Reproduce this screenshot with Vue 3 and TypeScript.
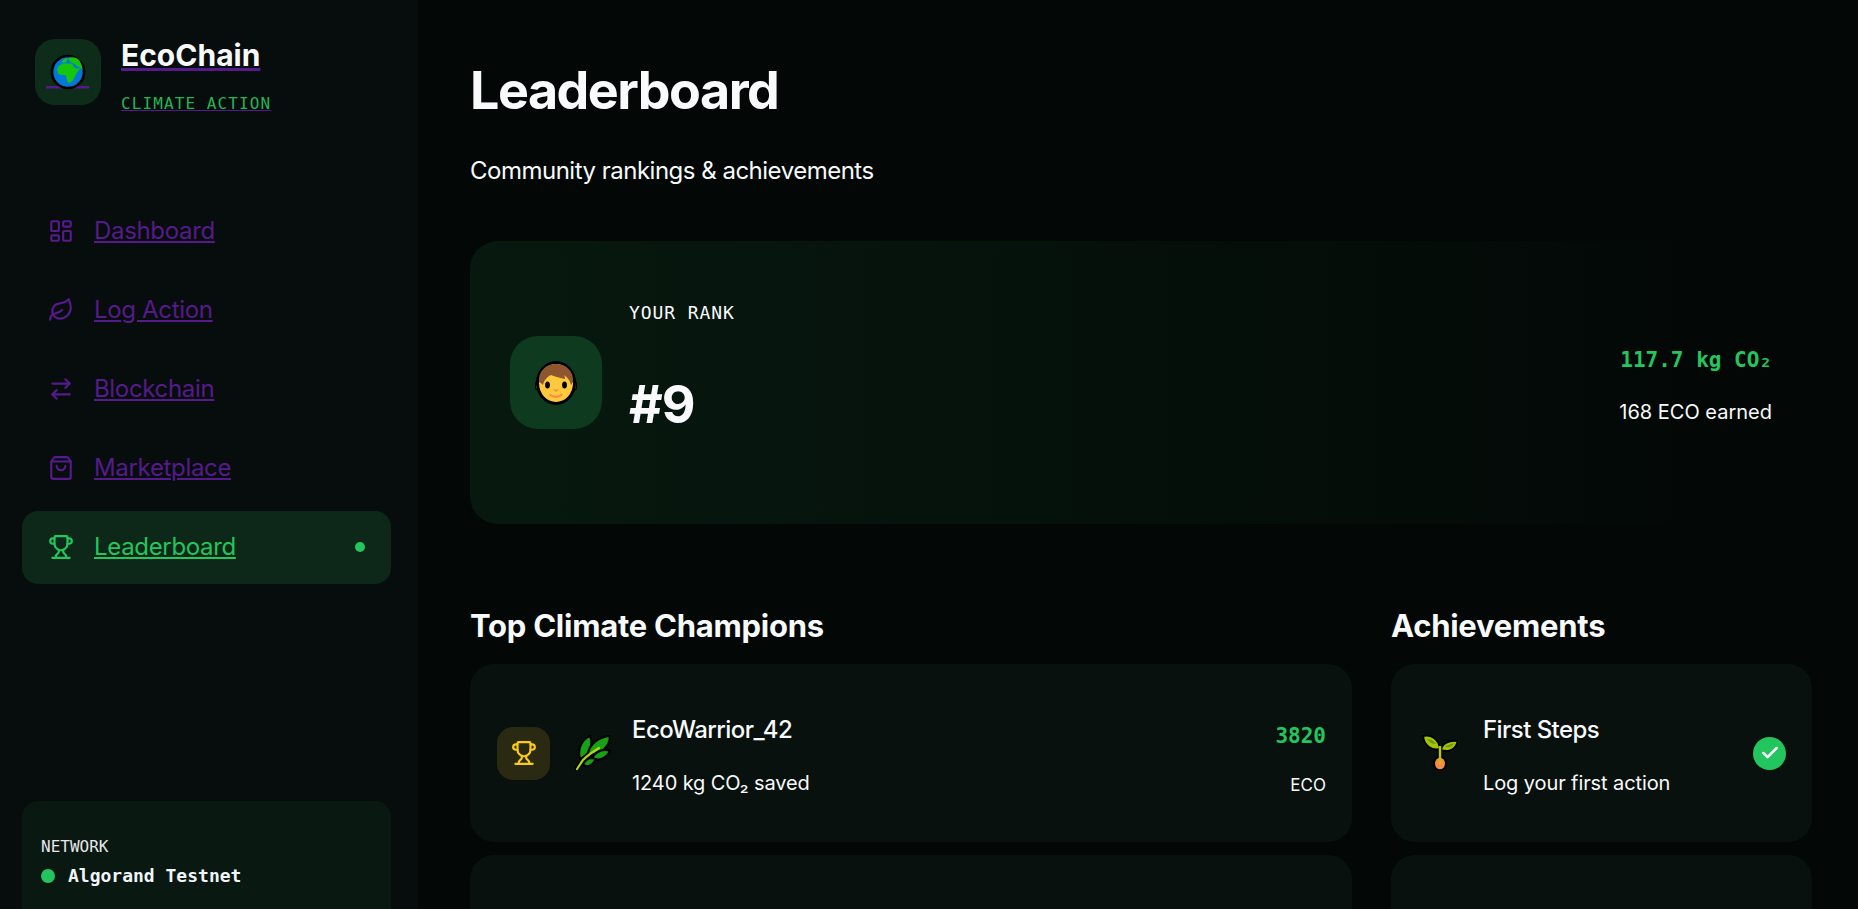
<template>
  <div class="app">
    <aside class="sidebar">
      <a href="#" class="brand">
        <span class="logo">
          <svg viewBox="0 0 66 66" width="66" height="66">
            <rect x="11" y="47" width="43" height="2.5" fill="#551a8b" />
            <circle cx="33" cy="33" r="16" fill="#0078d7" stroke="#000" stroke-width="2.6" />
            <path d="M22 30C23 27 26 25 29 24.500C31 24 35 25 37 24.500C38 26 39 29 41 29.500L45 29C44 32 41 34 40 37C39 40 37 43 34 44.500C32 43 31.500 39 31 36.500C28 36 24 36 23 34z" fill="#16c60c" />
            <path d="M33 19.500C37 17.500 41 18 44 21C46 24 47.500 27 47.500 31C46 29 44 28 42 27C40 25 38 24 36 23.500zM27 22l4-3 2 1-2 3-3 1z" fill="#16c60c" />
          </svg>
        </span>
        <span class="brand-text">
          <span class="brand-name">EcoChain</span>
          <span class="brand-tag">CLIMATE ACTION</span>
        </span>
      </a>

      <nav class="nav">
        <a
          v-for="item in navItems"
          :key="item.label"
          href="#"
          :class="['nav-item', { active: item.active }]"
        >
          <svg class="nav-icon" viewBox="0 0 24 24" fill="none" stroke="currentColor" stroke-width="2" stroke-linecap="round" stroke-linejoin="round">
            <path v-for="d in item.paths" :key="d" :d="d" />
          </svg>
          <span class="nav-label">{{ item.label }}</span>
          <span v-if="item.active" class="nav-dot"></span>
        </a>
      </nav>

      <div class="network">
        <div class="network-label">NETWORK</div>
        <div class="network-value"><span class="network-dot"></span>Algorand Testnet</div>
      </div>
    </aside>

    <main class="main">
      <h1 class="title">Leaderboard</h1>
      <p class="subtitle">Community rankings &amp; achievements</p>

      <section class="rank-card">
        <div class="rank-left">
          <div class="avatar">
            <svg viewBox="0 0 42 44" width="42" height="44">
              <rect x="0" y="19" width="42" height="11" rx="4" fill="#000" />
              <rect x="1.500" y="20" width="39" height="9" rx="3" fill="#ffc83d" />
              <ellipse cx="21" cy="22" rx="20" ry="22" fill="#000" />
              <ellipse cx="21" cy="22" rx="17" ry="19" fill="#ffc83d" />
              <path d="M4 21C3 10 11 3 21 3s18 7 17 18c-1 1-1 2-2 3-1-5-4-8-7-10 1 2 1 3 1 4-6-1-11-3-14-4-4 2-7 5-8 10-1-1-2-2-4-3z" fill="#8e562e" />
              <ellipse cx="12.500" cy="24" rx="2.400" ry="3.600" fill="#000" />
              <ellipse cx="29.500" cy="24" rx="2.400" ry="3.600" fill="#000" />
              <path d="M18 28.500h6l-3 2.400z" fill="#f7894a" />
              <path d="M15.500 34c3 2.400 8 2.400 11 0" fill="none" stroke="#f7894a" stroke-width="2.200" stroke-linecap="round" />
            </svg>
          </div>
          <div class="rank-info">
            <div class="rank-label">YOUR RANK</div>
            <div class="rank-value">#9</div>
          </div>
        </div>
        <div class="rank-right">
          <div class="rank-co2">117.7 kg CO₂</div>
          <div class="rank-eco">168 ECO earned</div>
        </div>
      </section>

      <div class="columns">
        <section class="col-left">
          <h2 class="section-title">Top Climate Champions</h2>
          <div class="card">
            <div class="medal">
              <svg viewBox="0 0 24 24" width="26" height="26" fill="none" stroke="currentColor" stroke-width="2" stroke-linecap="round" stroke-linejoin="round">
                <path v-for="d in trophyPaths" :key="d" :d="d" />
              </svg>
            </div>
            <svg class="emoji herb" viewBox="0 0 36 36" width="36" height="36">
              <path d="M2 34L8 25Q14 19 24 13" fill="none" stroke="#000" stroke-width="5" stroke-linecap="round" />
              <g fill="#16a116" stroke="#000" stroke-width="2.200" stroke-linejoin="round">
                <path d="M5 24C2 14 7 4 15 1C19 10 14 20 5 24z" />
                <path d="M13 19C14 9 24 2 35 1C35 11 26 21 13 19z" />
                <path d="M17 23C21 16 29 13 35 16C32 23 24 27 17 23z" />
                <path d="M8 30C10 24 15 22 21 24C18 30 13 33 8 30z" />
              </g>
              <path d="M2 34L8 25Q14 19 24 13" fill="none" stroke="#b5d60c" stroke-width="2.200" stroke-linecap="round" />
            </svg>
            <div class="card-body">
              <div class="card-title">EcoWarrior_42</div>
              <div class="card-sub">1240 kg CO₂ saved</div>
            </div>
            <div class="score">
              <div class="score-value">3820</div>
              <div class="score-unit">ECO</div>
            </div>
          </div>
          <div class="card"></div>
        </section>

        <section class="col-right">
          <h2 class="section-title">Achievements</h2>
          <div class="card ach">
            <svg class="emoji" viewBox="0 0 36 36" width="36" height="36">
              <path d="M18 12V26" stroke="#000" stroke-width="5" fill="none" />
              <ellipse cx="18" cy="28.500" rx="6" ry="6.800" fill="#f7894a" stroke="#000" stroke-width="2" />
              <g fill="#a4c400" stroke="#000" stroke-width="2" stroke-linejoin="round">
                <path d="M1 1C9 -1 17 4 18 14C10 16 2 11 1 1z" />
                <path d="M19 15C20 8 27 5 35.500 6C35 13 28 18 19 15z" />
              </g>
              <path d="M5 4C9 4 12 6 14 9C10 9 7 7 5 4zM23 12C25 10 28 9 32 8.500C30 12 26 13 23 12z" fill="#6f9a00" />
              <path d="M18 11V29" stroke="#b5c800" stroke-width="2.400" fill="none" />
            </svg>
            <div class="card-body">
              <div class="card-title">First Steps</div>
              <div class="card-sub">Log your first action</div>
            </div>
            <span class="check">
              <svg viewBox="0 0 24 24" width="20" height="20" fill="none" stroke="#fff" stroke-width="3" stroke-linecap="round" stroke-linejoin="round">
                <path d="M20 6 9 17l-5-5" />
              </svg>
            </span>
          </div>
          <div class="card"></div>
        </section>
      </div>
    </main>
  </div>
</template>

<script setup lang="ts">
interface NavItem {
  label: string
  paths: string[]
  active?: boolean
}

const trophyPaths: string[] = [
  'M10 14.66v1.626a2 2 0 0 1-.976 1.696A5 5 0 0 0 7 21.978',
  'M14 14.66v1.626a2 2 0 0 0 .976 1.696A5 5 0 0 1 17 21.978',
  'M18 9h1.5a1 1 0 0 0 0-5H18',
  'M4 22h16',
  'M6 9a6 6 0 0 0 12 0V3a1 1 0 0 0-1-1H7a1 1 0 0 0-1 1z',
  'M6 9H4.5a1 1 0 0 1 0-5H6'
]

const navItems: NavItem[] = [
  {
    label: 'Dashboard',
    paths: [
      'M4 3h5a1 1 0 0 1 1 1v7a1 1 0 0 1-1 1H4a1 1 0 0 1-1-1V4a1 1 0 0 1 1-1z',
      'M15 3h5a1 1 0 0 1 1 1v3a1 1 0 0 1-1 1h-5a1 1 0 0 1-1-1V4a1 1 0 0 1 1-1z',
      'M15 12h5a1 1 0 0 1 1 1v7a1 1 0 0 1-1 1h-5a1 1 0 0 1-1-1v-7a1 1 0 0 1 1-1z',
      'M4 16h5a1 1 0 0 1 1 1v3a1 1 0 0 1-1 1H4a1 1 0 0 1-1-1v-3a1 1 0 0 1 1-1z'
    ]
  },
  {
    label: 'Log Action',
    paths: [
      'M11 20A7 7 0 0 1 9.8 6.1C15.5 5 17 4.48 19 2c1 2 2 4.18 2 8 0 5.5-4.78 10-10 10Z',
      'M2 21c0-3 1.85-5.36 5.08-6C9.5 14.52 12 13 13 12'
    ]
  },
  {
    label: 'Blockchain',
    paths: ['m16 3 4 4-4 4', 'M20 7H4', 'm8 21-4-4 4-4', 'M4 17h16']
  },
  {
    label: 'Marketplace',
    paths: [
      'M16 10a4 4 0 0 1-8 0',
      'M3.103 6.034h17.794',
      'M3.4 5.467a2 2 0 0 0-.4 1.2V20a2 2 0 0 0 2 2h14a2 2 0 0 0 2-2V6.667a2 2 0 0 0-.4-1.2l-2.1-2.8A2 2 0 0 0 17 2H7a2 2 0 0 0-1.6.8z'
    ]
  },
  { label: 'Leaderboard', paths: trophyPaths, active: true }
]
</script>

<style>
html,
body {
  margin: 0;
  background: #030806;
}
</style>

<style scoped>
.app {
  display: flex;
  height: 100vh;
  overflow: hidden;
  background: #030806;
  color: #f8fafc;
  font-family: Inter, "Noto Sans", sans-serif;
}

.sidebar {
  flex: 0 0 418px;
  box-sizing: border-box;
  display: flex;
  flex-direction: column;
  padding: 39px 27px 0 22px;
  background: #070d0c;
}

.brand {
  display: flex;
  gap: 20px;
  margin-left: 13px;
  color: #f8fafc;
  text-decoration-color: #551a8b;
}

.logo {
  flex: none;
  width: 66px;
  height: 66px;
  border-radius: 20px;
  background: #0d2d1a;
}

.logo svg {
  display: block;
}

.brand-text {
  display: flex;
  flex-direction: column;
  align-items: flex-start;
}

.brand-name {
  font-size: 30px;
  line-height: 36px;
  margin-top: -2px;
  font-weight: 700;
  text-decoration: underline;
  text-decoration-color: #551a8b;
}

.brand-tag {
  margin-top: 22px;
  font-family: "DejaVu Sans Mono", monospace;
  font-size: 16px;
  line-height: 18px;
  letter-spacing: 1.1px;
  color: #22b456;
  text-decoration: underline;
  text-decoration-color: #551a8b;
  text-decoration-thickness: 1px;
}

.nav {
  display: flex;
  flex-direction: column;
  gap: 6px;
  margin-top: 82px;
}

.nav-item {
  display: flex;
  align-items: center;
  gap: 20px;
  box-sizing: border-box;
  height: 73px;
  padding: 0 26px 2px;
  border-radius: 16px;
  color: #551a8b;
  font-size: 24px;
  letter-spacing: -0.33px;
}

.nav-item.active {
  background: #0d2818;
  color: #22c55e;
}

.nav-icon {
  flex: none;
  width: 26px;
  height: 26px;
}

.nav-dot {
  width: 10px;
  height: 10px;
  margin-left: auto;
  border-radius: 50%;
  background: #22c55e;
}

.network {
  margin-top: auto;
  height: 108px;
  box-sizing: border-box;
  padding: 36px 19px 0;
  border-radius: 16px 16px 0 0;
  background: #0a1812;
  font-family: "DejaVu Sans Mono", monospace;
}

.network-label {
  font-size: 16px;
  line-height: 19px;
  color: #e5e7eb;
}

.network-value {
  display: flex;
  align-items: center;
  gap: 13px;
  margin-top: 9px;
  font-size: 18px;
  line-height: 22px;
  font-weight: 700;
  color: #f1f5f9;
}

.network-dot {
  width: 14px;
  height: 14px;
  border-radius: 50%;
  background: #22c55e;
}

.main {
  flex: 1;
  min-width: 0;
  padding: 60px 46px 0 52px;
}

.title {
  margin: 0;
  font-size: 52px;
  line-height: 62px;
  font-weight: 700;
  letter-spacing: -1.5px;
}

.subtitle {
  margin: 34px 0 0;
  font-size: 24px;
  line-height: 30px;
  letter-spacing: -0.5px;
}

.rank-card {
  display: flex;
  align-items: center;
  justify-content: space-between;
  box-sizing: border-box;
  height: 283px;
  margin: 55px 0 0;
  padding: 0 40px;
  border-radius: 28px;
  background: linear-gradient(90deg, #07190f 0%, #030806 92%);
}

.rank-left {
  display: flex;
  align-items: center;
  gap: 27px;
}

.avatar {
  display: flex;
  align-items: center;
  justify-content: center;
  width: 92px;
  height: 93px;
  border-radius: 28px;
  background: #0e3b20;
}

.rank-info {
  padding-bottom: 26px;
}

.rank-label {
  font-family: "DejaVu Sans Mono", monospace;
  font-size: 18px;
  line-height: 22px;
  letter-spacing: 0.9px;
}

.rank-value {
  margin-top: 48px;
  font-size: 52px;
  line-height: 66px;
  font-weight: 700;
  letter-spacing: -1px;
}

.rank-right {
  padding-top: 6px;
  text-align: right;
}

.rank-co2 {
  font-family: "DejaVu Sans Mono", monospace;
  font-size: 21px;
  line-height: 24px;
  font-weight: 700;
  color: #22c55e;
}

.rank-eco {
  margin-top: 28px;
  font-size: 20px;
  line-height: 24px;
}

.columns {
  display: flex;
  gap: 39px;
  margin: 84px 0 0;
}

.col-left {
  flex: 0 0 882px;
}

.col-right {
  flex: 1;
}

.section-title {
  margin: 0 0 20px;
  font-size: 31px;
  line-height: 36px;
  font-weight: 700;
  letter-spacing: -0.25px;
}

.card {
  display: flex;
  align-items: center;
  box-sizing: border-box;
  height: 178px;
  margin-bottom: 13px;
  padding: 0 26px 0 27px;
  border-radius: 24px;
  background: #08110d;
}

.medal {
  display: flex;
  align-items: center;
  justify-content: center;
  flex: none;
  width: 53px;
  height: 53px;
  border-radius: 16px;
  background: #2a2a12;
  color: #facc15;
}

.emoji {
  flex: none;
}

.herb {
  margin: 0 21px 0 25px;
}

.card-body {
  flex: 1;
  padding-top: 4px;
}

.card-title {
  font-size: 24px;
  line-height: 30px;
  font-weight: 500;
  letter-spacing: -0.55px;
}

.card-sub {
  margin-top: 26px;
  font-size: 20px;
  line-height: 24px;
  letter-spacing: -0.1px;
}

.score {
  padding-top: 12px;
  text-align: right;
}

.score-value {
  font-family: "DejaVu Sans Mono", monospace;
  font-size: 21px;
  line-height: 26px;
  font-weight: 700;
  color: #22c55e;
}

.score-unit {
  margin-top: 25px;
  font-size: 17px;
  line-height: 22px;
}

.ach {
  padding: 0 26px 0 31px;
}

.ach .emoji {
  margin-right: 25px;
}

.check {
  display: flex;
  align-items: center;
  justify-content: center;
  flex: none;
  width: 33px;
  height: 33px;
  border-radius: 50%;
  background: #22c55e;
}
</style>
